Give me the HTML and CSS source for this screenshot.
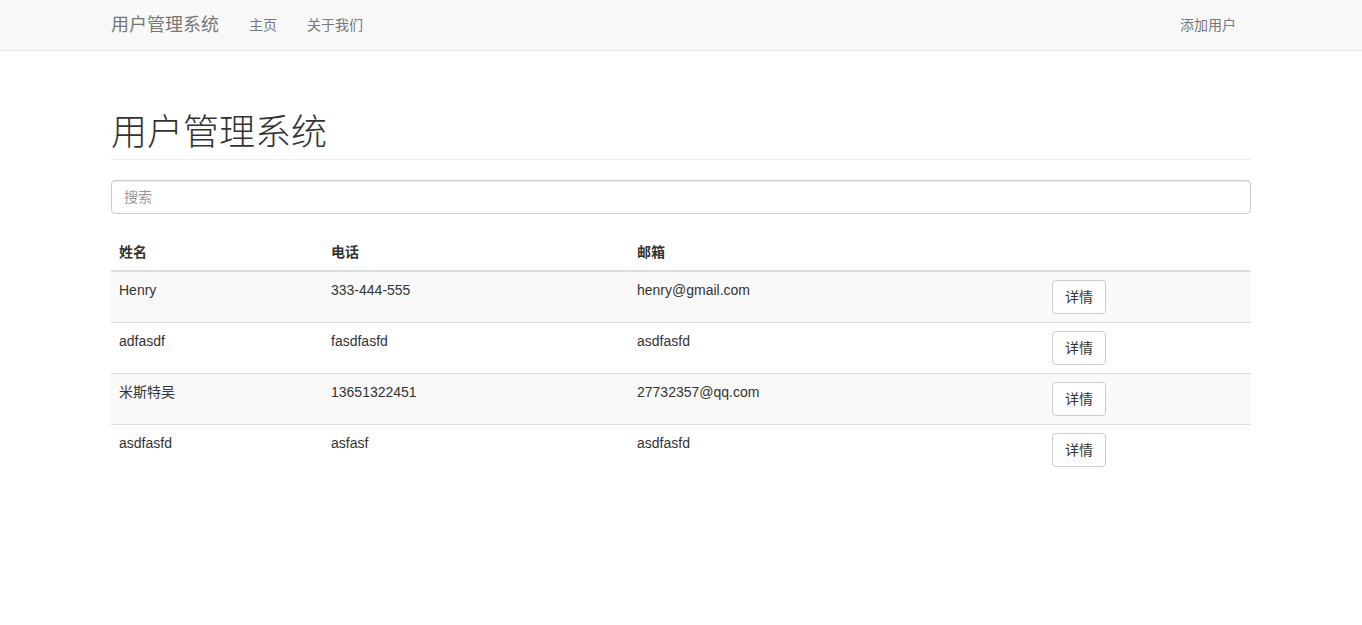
FILE: index.html
```html
<!DOCTYPE html>
<html lang="zh-CN">
<head>
<meta charset="utf-8">
<title>用户管理系统</title>
<link rel="stylesheet" href="styles.css">
</head>
<body>
<nav class="navbar">
  <div class="container nav-inner">
    <a class="brand" href="#">用户管理系统</a>
    <a class="nav-link" href="#">主页</a>
    <a class="nav-link" href="#">关于我们</a>
    <a class="nav-link nav-right" href="#">添加用户</a>
  </div>
</nav>

<div class="container main">
  <h1 class="page-header">用户管理系统</h1>
  <input class="search" type="text" placeholder="搜索">

  <table class="users">
    <thead>
      <tr>
        <th class="c-name">姓名</th>
        <th class="c-phone">电话</th>
        <th class="c-mail">邮箱</th>
        <th></th>
      </tr>
    </thead>
    <tbody>
      <tr>
        <td>Henry</td>
        <td>333-444-555</td>
        <td>henry@gmail.com</td>
        <td><button class="btn">详情</button></td>
      </tr>
      <tr>
        <td>adfasdf</td>
        <td>fasdfasfd</td>
        <td>asdfasfd</td>
        <td><button class="btn">详情</button></td>
      </tr>
      <tr>
        <td>米斯特吴</td>
        <td>13651322451</td>
        <td>27732357@qq.com</td>
        <td><button class="btn">详情</button></td>
      </tr>
      <tr>
        <td>asdfasfd</td>
        <td>asfasf</td>
        <td>asdfasfd</td>
        <td><button class="btn">详情</button></td>
      </tr>
    </tbody>
  </table>
</div>
</body>
</html>
```

FILE: styles.css
```css
* { box-sizing: border-box; }

body {
  margin: 0;
  font-family: "Liberation Sans", Arial, "Noto Sans CJK SC", sans-serif;
  font-size: 14px;
  line-height: 1.42857;
  color: #333;
  background: #fff;
}

a { text-decoration: none; }

.container {
  width: 1170px;
  margin: 0 auto;
  padding: 0 15px;
}
.main { display: flow-root; }

/* navbar */
.navbar {
  height: 51px;
  background: #f8f8f8;
  border-bottom: 1px solid #e7e7e7;
  margin-bottom: 20px;
}
.nav-inner {
  display: flex;
  align-items: center;
  height: 50px;
}
.brand {
  font-size: 18px;
  line-height: 20px;
  color: #777;
  padding: 15px 15px 15px 0;
}
.nav-link {
  color: #777;
  line-height: 20px;
  padding: 15px;
}
.nav-right { margin-left: auto; }

/* heading */
.page-header {
  margin: 39px 0 20px;
  padding-bottom: 9px;
  border-bottom: 1px solid #eee;
  font-family: "Noto Sans CJK SC", sans-serif;
  font-size: 36px;
  font-weight: 300;
  line-height: 39.6px;
  color: #333;
}

.search {
  display: block;
  width: 100%;
  height: 34px;
  padding: 6px 12px;
  font: inherit;
  color: #555;
  border: 1px solid #ccc;
  border-radius: 4px;
  box-shadow: inset 0 1px 1px rgba(0,0,0,.075);
  margin-bottom: 20px;
}
.search::placeholder { color: #999; }

/* table */
.users {
  width: 100%;
  border-collapse: collapse;
  border-spacing: 0;
}
.users th, .users td {
  padding: 8px;
  line-height: 20px;
  text-align: left;
  vertical-align: top;
}
.users th {
  font-weight: bold;
  border-bottom: 2px solid #ddd;
}
.users td { border-top: 1px solid #ddd; }
.users tbody tr:nth-child(odd) { background: #f9f9f9; }
.c-name { width: 212px; }
.c-phone { width: 306px; }
.c-mail { width: 415px; }

.btn {
  display: inline-block;
  padding: 6px 12px;
  font: inherit;
  line-height: 20px;
  color: #333;
  background: #fff;
  border: 1px solid #ccc;
  border-radius: 4px;
  cursor: pointer;
}
```
